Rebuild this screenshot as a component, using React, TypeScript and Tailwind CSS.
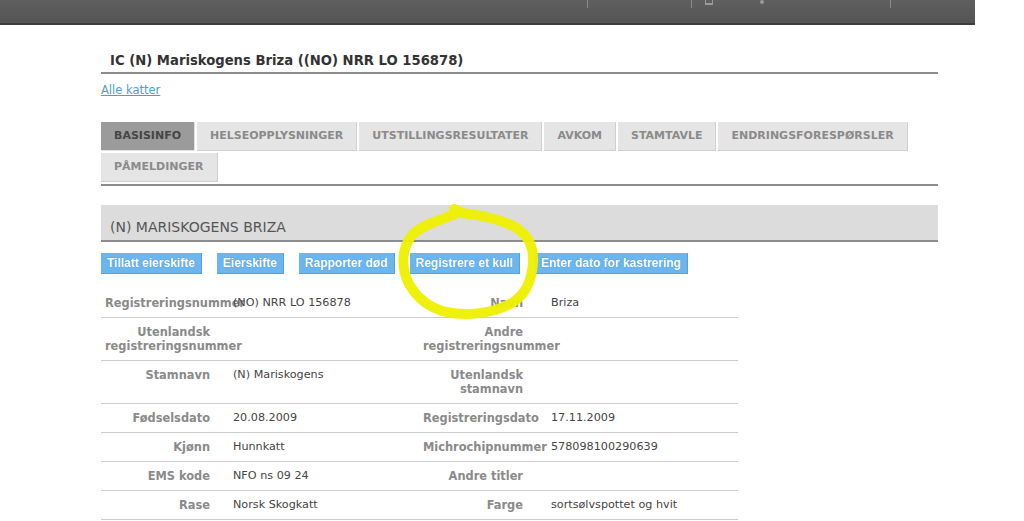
import React from "react";

const tabsRow = [
  "BASISINFO",
  "HELSEOPPLYSNINGER",
  "UTSTILLINGSRESULTATER",
  "AVKOM",
  "STAMTAVLE",
  "ENDRINGSFORESPØRSLER",
  "PÅMELDINGER",
];

const buttons = [
  "Tillatt eierskifte",
  "Eierskifte",
  "Rapporter død",
  "Registrere et kull",
  "Enter dato for kastrering",
];

type Row = { l1: string[]; v1: string; l2: string[]; v2: string };

const rows: Row[] = [
  { l1: ["Registreringsnummer"], v1: "(NO) NRR LO 156878", l2: ["Navn"], v2: "Briza" },
  { l1: ["Utenlandsk", "registreringsnummer"], v1: "", l2: ["Andre", "registreringsnummer"], v2: "" },
  { l1: ["Stamnavn"], v1: "(N) Mariskogens", l2: ["Utenlandsk", "stamnavn"], v2: "" },
  { l1: ["Fødselsdato"], v1: "20.08.2009", l2: ["Registreringsdato"], v2: "17.11.2009" },
  { l1: ["Kjønn"], v1: "Hunnkatt", l2: ["Michrochipnummer"], v2: "578098100290639" },
  { l1: ["EMS kode"], v1: "NFO ns 09 24", l2: ["Andre titler"], v2: "" },
  { l1: ["Rase"], v1: "Norsk Skogkatt", l2: ["Farge"], v2: "sortsølvspottet og hvit" },
];

export default function App() {
  return (
    <div
      className="relative w-[1024px] h-[521px] overflow-hidden bg-white"
      style={{ fontFamily: '"DejaVu Sans", Verdana, sans-serif' }}
    >
      {/* top bar */}
      <div className="relative w-[975px] h-[25px] bg-gradient-to-b from-[#5f5f5f] to-[#545454] border-b-2 border-[#3c3c3c]">
        <div className="absolute left-[587px] top-0 w-px h-[8px] bg-[#8a8a8a]" />
        <div className="absolute left-[691px] top-0 w-px h-[8px] bg-[#8a8a8a]" />
        <div className="absolute left-[890px] top-0 w-px h-[8px] bg-[#8a8a8a]" />
        <div className="absolute left-[705px] top-0 w-[8px] h-[5px] border-b-2 border-x border-[#9a9a9a]" />
        <div className="absolute left-[760px] top-0 w-[4px] h-[4px] rounded-full bg-[#9a9a9a]" />
      </div>

      <div className="ml-[101px] w-[837px]">
        {/* title */}
        <div className="pt-[27px] pb-[3px] border-b-2 border-[#8c8c8c] pl-[9px]">
          <h1 className="text-[13.2px] leading-[17px] font-bold text-[#333]">
            IC (N) Mariskogens Briza ((NO) NRR LO 156878)
          </h1>
        </div>
        <div className="mt-[9px] text-[11.5px] leading-[15px]">
          <a className="text-[#4c9ed3] underline">Alle katter</a>
        </div>

        {/* tabs */}
        <div className="mt-[24px] flex flex-wrap gap-x-[2px] gap-y-[2px]">
          {tabsRow.map((t, i) => (
            <div
              key={t}
              className={
                i === 0
                  ? "h-[29px] px-[13px] flex items-center bg-[#9b9b9b] text-[#454545] text-[11px] font-bold border-r border-b border-[#e0e0e0]"
                  : "h-[29px] px-[13px] flex items-center bg-[#e5e5e5] text-[#8a8a8a] text-[11px] font-bold border-r border-b border-[#cfcfcf]"
              }
            >
              {t}
            </div>
          ))}
        </div>
        <div className="mt-[2px] h-[2px] bg-[#8c8c8c]" />

        {/* section header */}
        <div className="mt-[19px] h-[37px] bg-[#dcdcdc] border-b-2 border-[#8c8c8c] pl-[9px] flex items-end pb-[4px]">
          <span className="text-[14px] leading-[17px] text-[#555]">(N) MARISKOGENS BRIZA</span>
        </div>

        {/* buttons */}
        <div
          className="mt-[11px] flex gap-[15px]"
          style={{ fontFamily: '"Liberation Sans", Arial, sans-serif' }}
        >
          {buttons.map((b) => (
            <div
              key={b}
              className="h-[21px] px-[6px] flex items-center bg-[#6bb6ee] border-b border-r border-[#5aa0d8] text-white text-[12px] font-bold [text-shadow:0_0_1px_#3d7fb8]"
            >
              {b}
            </div>
          ))}
        </div>

        {/* table */}
        <div className="mt-[15px] w-[637px] text-[11.2px] leading-[14px]">
          {rows.map((r, i) => (
            <div
              key={i}
              className="grid grid-cols-[120px_192px_128px_197px] border-b border-[#cccccc] py-[7px]"
            >
              <div className="min-w-0 text-right pl-[4px] pr-[11px] font-bold text-[#8a8a8a] text-[11.4px]">
                {r.l1.map((x) => (
                  <div key={x}>{x}</div>
                ))}
              </div>
              <div className="min-w-0 pl-[12px] text-[#444]">{r.v1}</div>
              <div className="min-w-0 text-right pl-[10px] pr-[18px] font-bold text-[#8a8a8a] text-[11.4px]">
                {r.l2.map((x) => (
                  <div key={x}>{x}</div>
                ))}
              </div>
              <div className="min-w-0 pl-[10px] text-[#444]">{r.v2}</div>
            </div>
          ))}
        </div>
      </div>

      {/* yellow hand-drawn circle */}
      <svg
        className="absolute left-0 top-0 pointer-events-none"
        width="1024"
        height="521"
        viewBox="0 0 1024 521"
      >
        <path
          d="M457 213 C445 219 424 223 412 235 C401 249 401 268 409 284 C417 298 430 308 446 312 C465 316 490 314 508 305 C525 297 532 281 533 262 C534 246 528 235 515 227 C500 219 480 215 462 213 L454 209"
          fill="none"
          stroke="#eef000"
          strokeWidth="10"
          strokeLinecap="round"
          strokeLinejoin="round"
          opacity="0.95"
        />
      </svg>
    </div>
  );
}
